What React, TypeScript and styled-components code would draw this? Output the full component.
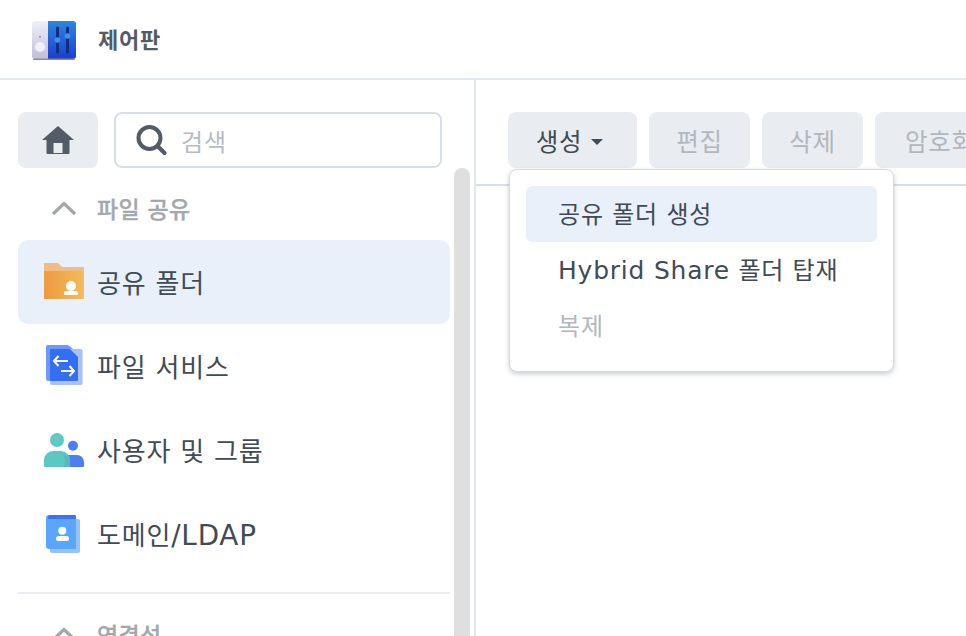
import { FC, ReactNode } from "react";
import styled, { createGlobalStyle } from "styled-components";

const GlobalStyle = createGlobalStyle`
  html, body {
    margin: 0;
    height: 100%;
    overflow: hidden;
    background: #fff;
  }
  * {
    box-sizing: border-box;
  }
  body {
    font-family: "DejaVu Sans", "Noto Sans CJK KR", sans-serif;
    color: #414b55;
    letter-spacing: 0.8px;
  }
`;

const Page = styled.div`
  width: 966px;
  height: 636px;
  display: flex;
  flex-direction: column;
  overflow: hidden;
`;

const Header = styled.header`
  flex: 0 0 80px;
  display: flex;
  align-items: center;
  gap: 22px;
  padding: 0 0 0 32px;
  border-bottom: 2px solid #e3e7ee;
`;

const HeaderTitle = styled.h1`
  margin: 0 0 2px;
  font-size: 22px;
  font-weight: 700;
  color: #525a64;
`;

const Body = styled.div`
  flex: 1;
  min-height: 0;
  display: flex;
`;

const Sidebar = styled.aside`
  flex: 0 0 476px;
  display: flex;
  flex-direction: column;
  padding: 32px 0 0 18px;
  border-right: 2px solid #e3e7ee;
  overflow: hidden;
`;

const SearchRow = styled.div`
  flex: 0 0 56px;
  display: flex;
  gap: 16px;
`;

const HomeButton = styled.button`
  width: 80px;
  height: 56px;
  padding: 0;
  border: 0;
  border-radius: 8px;
  background: #e9edf1;
  display: flex;
  align-items: center;
  justify-content: center;
`;

const SearchBox = styled.div`
  width: 328px;
  height: 56px;
  display: flex;
  align-items: center;
  gap: 14px;
  padding-left: 19px;
  border: 2px solid #d9dfe9;
  border-radius: 8px;
  font-size: 24px;
  color: #b7bcc2;
`;

const SidebarBody = styled.div`
  flex: 1;
  min-height: 0;
  display: flex;
  gap: 4px;
`;

const NavList = styled.nav`
  width: 432px;
  display: flex;
  flex-direction: column;
`;

const SectionHead = styled.div`
  flex: 0 0 72px;
  display: flex;
  align-items: center;
  gap: 20px;
  padding: 7px 0 0 33px;
  font-size: 23px;
  font-weight: 500;
  letter-spacing: 0.3px;
  -webkit-text-stroke: 0.3px #a3a8ae;
  color: #a3a8ae;
`;

const NavItem = styled.div<{ $active?: boolean }>`
  flex: 0 0 84px;
  display: flex;
  align-items: center;
  gap: 13px;
  padding: 0 0 2px 26px;
  border-radius: 10px;
  font-size: 26px;
  color: #414b55;
  background: ${(props) => (props.$active ? "#e9f0fa" : "transparent")};
`;

const Divider = styled.hr`
  flex: 0 0 2px;
  width: 100%;
  margin: 16px 0 0;
  border: 0;
  background: #e9edf1;
`;

const Scrollbar = styled.div`
  width: 16px;
  border-radius: 8px 8px 0 0;
  background: #dfdfdf;
`;

const Main = styled.main`
  flex: 1;
  min-width: 0;
  position: relative;
  overflow: hidden;
  padding: 32px 0 0 32px;
`;

const Toolbar = styled.div`
  display: flex;
  gap: 12px;
  height: 56px;
`;

const ToolButton = styled.button<{ $width: number; $disabled?: boolean }>`
  flex: 0 0 ${(props) => props.$width}px;
  height: 56px;
  padding: 0;
  border: 0;
  border-radius: 8px;
  background: #e9edf1;
  display: flex;
  align-items: center;
  justify-content: center;
  gap: 9px;
  font-family: inherit;
  letter-spacing: inherit;
  font-size: 24.5px;
  color: ${(props) => (props.$disabled ? "#b2b7bd" : "#414b55")};
`;

const Caret = styled.span`
  width: 0;
  height: 0;
  border-left: 6.5px solid transparent;
  border-right: 6.5px solid transparent;
  border-top: 6px solid #414b55;
  margin: 3px 6px 0 0;
`;

const ToolbarRule = styled.div`
  height: 2px;
  margin: 16px 0 0 -32px;
  background: #d9dfe9;
`;

const Menu = styled.div`
  position: absolute;
  left: 33px;
  top: 89px;
  width: 385px;
  height: 203px;
  padding: 16px;
  background: #fff;
  border: 1px solid #d5dbe6;
  border-radius: 8px;
  box-shadow: 0 2px 5px rgba(65, 75, 85, 0.28);
`;

const MenuItem = styled.div<{ $active?: boolean; $disabled?: boolean }>`
  height: 56px;
  display: flex;
  align-items: center;
  padding: 0 0 4px 32px;
  border-radius: 6px;
  font-size: 24px;
  background: ${(props) => (props.$active ? "#e9f0fa" : "transparent")};
  color: ${(props) => (props.$disabled ? "#b2b7bd" : "#414b55")};
`;

const Latin = styled.span`
  font-size: 1.04em;
`;

const NavLatin = styled.span`
  font-size: 1.07em;
`;

const AppIcon: FC = () => (
  <svg width="44" height="42" viewBox="0 -3 44 42">
    <defs>
      <linearGradient id="cpLeft" x1="0" y1="0" x2="0" y2="1">
        <stop offset="0" stopColor="#eeeff8" />
        <stop offset="1" stopColor="#c1bfd8" />
      </linearGradient>
      <linearGradient id="cpRight" x1="0" y1="0" x2="0" y2="1">
        <stop offset="0" stopColor="#2f86de" />
        <stop offset="1" stopColor="#1a3fd0" />
      </linearGradient>
    </defs>
    <path d="M3 0h13v38H3a3 3 0 0 1-3-3V3a3 3 0 0 1 3-3z" fill="url(#cpLeft)" />
    <path d="M16 0h25a3 3 0 0 1 3 3v32a3 3 0 0 1-3 3H16z" fill="url(#cpRight)" />
    <rect x="1" y="37.500" width="42" height="1.500" rx="0.700" fill="#8b8a95" />
    <circle cx="8" cy="26" r="5" fill="#f1f1f7" />
    <rect x="7.300" y="15" width="1.400" height="1.600" fill="#77778a" />
    <rect x="24" y="5.500" width="3" height="27" rx="1.500" fill="#10307f" />
    <rect x="34" y="5.500" width="3" height="27" rx="1.500" fill="#10307f" />
    <circle cx="25.500" cy="19" r="2.800" fill="#3f93ee" />
    <circle cx="35.500" cy="15" r="2.800" fill="#3f93ee" />
  </svg>
);

const HomeIcon: FC = () => (
  <svg width="32" height="28" viewBox="0 0 32 28">
    <path d="M16 0 0 14h4.500v13a1 1 0 0 0 1 1h21a1 1 0 0 0 1-1V14H32z" fill="#535b66" />
    <rect x="11.500" y="17" width="9" height="10" fill="#e9edf1" />
  </svg>
);

const SearchIcon: FC = () => (
  <svg width="32" height="32" viewBox="0 0 32 32" fill="none" stroke="#535b66" strokeWidth="4">
    <circle cx="14.500" cy="14" r="11" />
    <path d="m23 22.500 6.500 6.500" strokeLinecap="round" />
  </svg>
);

const ChevronUp: FC = () => (
  <svg width="26" height="16" viewBox="0 0 26 16" fill="none" stroke="#a3a8ae" strokeWidth="3.400">
    <path d="M2 14 13 3.500 24 14" />
  </svg>
);

const IconSlot = styled.span`
  flex: 0 0 40px;
  height: 40px;
  display: block;
`;

const FolderIcon: FC = () => (
  <svg width="40" height="40" viewBox="0 0 40 40">
    <defs>
      <linearGradient id="folderFill" x1="0" y1="0" x2="1" y2="0">
        <stop offset="0" stopColor="#ee9a3e" />
        <stop offset="1" stopColor="#f4bb5c" />
      </linearGradient>
    </defs>
    <path d="M0 3a1 1 0 0 1 1-1h13l4 4h21a1 1 0 0 1 1 1v4H0z" fill="#eebd85" />
    <path d="M0 10h40v27a1 1 0 0 1-1 1H1a1 1 0 0 1-1-1z" fill="url(#folderFill)" />
    <circle cx="27" cy="25" r="5" fill="#fff" />
    <rect x="20" y="30" width="14" height="4" rx="1.500" fill="#fff" />
  </svg>
);

const FileServiceIcon: FC = () => (
  <svg width="40" height="40" viewBox="0 0 40 40">
    <path d="M4 0h20l10 8v28H4a2 2 0 0 1-2-2V2a2 2 0 0 1 2-2z" fill="#6f98fa" />
    <path d="M6 4h31a1.500 1.500 0 0 1 1.500 1.500V38.500a1.500 1.500 0 0 1-1.500 1.500H8A2 2 0 0 1 6 38z" fill="#a8c1fb" />
    <path d="M6 4h20l8 8v24H7a1 1 0 0 1-1-1z" fill="#326ff2" />
    <path d="M24 16H10m4.500-5-4.500 5 4.500 5M17 26h13m-4.500-5 4.500 5-4.500 5" fill="none" stroke="#fff" strokeWidth="2" />
  </svg>
);

const UsersIcon: FC = () => (
  <svg width="40" height="40" viewBox="0 0 40 40">
    <circle cx="13" cy="11" r="7" fill="#5fc9c3" />
    <circle cx="29" cy="16.700" r="5" fill="#4c7ff5" />
    <path d="M20 26h13a7 7 0 0 1 7 7v4a1 1 0 0 1-1 1H20z" fill="#4c7ff5" />
    <path d="M9 22h8a9 9 0 0 1 9 9v7H1a1 1 0 0 1-1-1v-6a9 9 0 0 1 9-9z" fill="#5dc7c2" />
    <path d="M26 31v7h-7c2.500-3 3-8 .5-12 4 .5 6.500 2.500 6.500 5z" fill="#56b8c0" />
  </svg>
);

const DomainIcon: FC = () => (
  <svg width="40" height="40" viewBox="0 0 40 40">
    <rect x="6" y="6" width="30" height="34" rx="2" fill="#92c4fb" />
    <path d="M2 5a3 3 0 0 1 3-3h25a2 2 0 0 1 2 2v32H5a3 3 0 0 1-3-3z" fill="#5aa6fa" />
    <path d="M4 5a3 3 0 0 1 3-3h23a2 2 0 0 1 2 2v2H4z" fill="#3f72ef" />
    <circle cx="18.300" cy="17.700" r="4" fill="#fff" />
    <rect x="12" y="23" width="13" height="5" rx="2.500" fill="#fff" />
  </svg>
);

const Item: FC<{ icon: ReactNode; active?: boolean; children: ReactNode }> = ({ icon, active, children }) => (
  <NavItem $active={active}>
    <IconSlot>{icon}</IconSlot>
    <span>{children}</span>
  </NavItem>
);

export default function App() {
  return (
    <Page>
      <GlobalStyle />
      <Header>
        <AppIcon />
        <HeaderTitle>제어판</HeaderTitle>
      </Header>
      <Body>
        <Sidebar>
          <SearchRow>
            <HomeButton aria-label="홈">
              <HomeIcon />
            </HomeButton>
            <SearchBox>
              <SearchIcon />
              검색
            </SearchBox>
          </SearchRow>
          <SidebarBody>
            <NavList>
              <SectionHead>
                <ChevronUp />
                파일 공유
              </SectionHead>
              <Item icon={<FolderIcon />} active>
                공유 폴더
              </Item>
              <Item icon={<FileServiceIcon />}>파일 서비스</Item>
              <Item icon={<UsersIcon />}>사용자 및 그룹</Item>
              <Item icon={<DomainIcon />}>
                도메인<NavLatin>/LDAP</NavLatin>
              </Item>
              <Divider />
              <SectionHead>
                <ChevronUp />
                연결성
              </SectionHead>
            </NavList>
            <Scrollbar />
          </SidebarBody>
        </Sidebar>
        <Main>
          <Toolbar>
            <ToolButton $width={129}>
              생성
              <Caret />
            </ToolButton>
            <ToolButton $width={101} $disabled>
              편집
            </ToolButton>
            <ToolButton $width={101} $disabled>
              삭제
            </ToolButton>
            <ToolButton $width={130} $disabled>
              암호화
            </ToolButton>
          </Toolbar>
          <ToolbarRule />
          <Menu>
            <MenuItem $active>공유 폴더 생성</MenuItem>
            <MenuItem>
              <span>
                <Latin>Hybrid Share</Latin> 폴더 탑재
              </span>
            </MenuItem>
            <MenuItem $disabled>복제</MenuItem>
          </Menu>
        </Main>
      </Body>
    </Page>
  );
}
